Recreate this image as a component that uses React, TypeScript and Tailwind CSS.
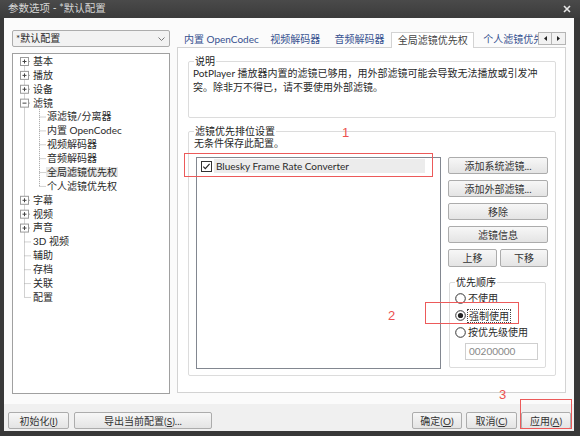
import type { ReactNode } from "react";

function Btn({ children, className = "" }: { children: ReactNode; className?: string }) {
  return (
    <div
      className={
        "flex items-center justify-center rounded-[2px] border border-[#acacac] bg-gradient-to-b from-[#f7f7f7] to-[#e4e4e4] text-[#333] leading-none " +
        className
      }
    >
      {children}
    </div>
  );
}

function Key({ k }: { k: string }) {
  return (
    <>
      (<span className="underline underline-offset-[1px]">{k}</span>)
    </>
  );
}

function GroupBox({ title, className = "", children }: { title: string; className?: string; children: ReactNode }) {
  return (
    <div className={"relative rounded-[2px] border border-[#dcdcdc] " + className}>
      <span className="absolute -top-[7px] left-[5px] bg-white px-[1px] leading-[12px] text-[#222]">{title}</span>
      {children}
    </div>
  );
}

function Radio({ checked = false }: { checked?: boolean }) {
  return (
    <svg width="11" height="11" viewBox="0 0 11 11" className="shrink-0">
      <circle cx="5.5" cy="5.5" r="4.8" fill="#fff" stroke="#333" strokeWidth="1" />
      {checked && <circle cx="5.5" cy="5.5" r="2.6" fill="#222" />}
    </svg>
  );
}

type Node = { label: string; level: 0 | 1; box?: "+" | "-"; selected?: boolean };

const tree: Node[] = [
  { label: "基本", level: 0, box: "+" },
  { label: "播放", level: 0, box: "+" },
  { label: "设备", level: 0, box: "+" },
  { label: "滤镜", level: 0, box: "-" },
  { label: "源滤镜/分离器", level: 1 },
  { label: "内置 OpenCodec", level: 1 },
  { label: "视频解码器", level: 1 },
  { label: "音频解码器", level: 1 },
  { label: "全局滤镜优先权", level: 1, selected: true },
  { label: "个人滤镜优先权", level: 1 },
  { label: "字幕", level: 0, box: "+" },
  { label: "视频", level: 0, box: "+" },
  { label: "声音", level: 0, box: "+" },
  { label: "3D 视频", level: 0 },
  { label: "辅助", level: 0 },
  { label: "存档", level: 0 },
  { label: "关联", level: 0 },
  { label: "配置", level: 0 },
];

const ROW = 13.88;

function TreeLines() {
  const cy = (i: number) => 7.5 + i * ROW;
  return (
    <svg width="60" height="260" className="pointer-events-none absolute left-0 top-0">
      <g stroke="#a3a3a3" strokeWidth="1" strokeDasharray="1 1" fill="none">
        <line x1="11.5" y1={cy(0)} x2="11.5" y2={cy(17)} />
        <line x1="26.5" y1={cy(3) + 4} x2="26.5" y2={cy(9)} />
        {tree.map((n, i) =>
          n.level === 0 ? (
            <line key={i} x1={n.box ? 16 : 11.5} y1={cy(i)} x2="18" y2={cy(i)} />
          ) : (
            <line key={i} x1="26.5" y1={cy(i)} x2="33" y2={cy(i)} />
          )
        )}
      </g>
      {tree.map((n, i) =>
        n.box ? (
          <g key={"b" + i}>
            <rect x="7.5" y={cy(i) - 4} width="8" height="8" fill="#fff" stroke="#9a9a9a" />
            <line x1="9.5" y1={cy(i)} x2="13.5" y2={cy(i)} stroke="#444" />
            {n.box === "+" && <line x1="11.5" y1={cy(i) - 2} x2="11.5" y2={cy(i) + 2} stroke="#444" />}
          </g>
        ) : null
      )}
    </svg>
  );
}

export default function App() {
  return (
    <div className="relative flex h-[436px] w-[580px] flex-col bg-[#383838] font-['Lato','Noto_Sans_CJK_SC',sans-serif] text-[10px] text-[#2a2a2a]">
      {/* title bar */}
      <div className="flex h-[18px] items-center justify-between bg-gradient-to-b from-[#4a4a4a] to-[#3b3b3b] pl-[8px] pr-[9px]">
        <span className="text-[10.5px] text-[#d6d6d6]">参数选项 - *默认配置</span>
        <svg width="8" height="8" viewBox="0 0 8 8">
          <path d="M1 1l6 6M7 1 1 7" stroke="#e6e6e6" strokeWidth="1.6" />
        </svg>
      </div>

      {/* body */}
      <div className="mb-[5px] ml-[4px] mr-[6px] flex flex-1 flex-col bg-[#fbfbfb]">
        <div className="flex h-[386px] pl-[8px] pt-[12px]">
          {/* left column */}
          <div className="flex w-[158px] flex-col">
            <div className="flex h-[17px] items-center justify-between rounded-[2px] border border-[#acacac] bg-[#f2f2f2] pl-[3px] pr-[4px]">
              <span>*默认配置</span>
              <svg width="7" height="4" viewBox="0 0 7 4">
                <path d="M0.5 0.5 3.5 3.5 6.5 0.5" stroke="#777" fill="none" />
              </svg>
            </div>
            <div className="relative mt-[6px] h-[341px] border border-[#a0a0a0] bg-white">
              <TreeLines />
              {tree.map((n, i) => (
                <div
                  key={i}
                  className={
                    "flex h-[13.88px] items-center whitespace-nowrap leading-none " +
                    (n.level === 0 ? "pl-[19px]" : "pl-[33px]")
                  }
                >
                  <span className={n.selected ? "bg-[#e6e6e6] px-[1px]" : "px-[1px]"}>{n.label}</span>
                </div>
              ))}
            </div>
          </div>

          {/* right column */}
          <div className="ml-[7px] flex w-[389px] flex-col">
            <div className="flex h-[17px] items-end pl-[3px]">
              <div className="flex h-[15px] w-[83px] items-center justify-center text-[#35508f]">内置 OpenCodec</div>
              <div className="flex h-[15px] w-[65px] items-center justify-center text-[#35508f]">视频解码器</div>
              <div className="flex h-[15px] w-[64px] items-center justify-center text-[#35508f]">音频解码器</div>
              <div className="z-10 -mb-[1px] flex h-[16px] w-[83px] items-center justify-center border border-b-0 border-[#d3d3d3] bg-white text-[#444]">
                全局滤镜优先权
              </div>
              <div className="flex h-[15px] w-[64px] items-center overflow-hidden whitespace-nowrap pl-[9px] text-[#35508f]">
                个人滤镜优先权
              </div>
              <div className="mb-[2px] flex">
                <div className="flex h-[13px] w-[14px] items-center justify-center border border-[#b5b5b5] bg-[#f2f2f2]">
                  <svg width="3" height="5" viewBox="0 0 3 5"><path d="M3 0v5L0 2.5z" fill="#222" /></svg>
                </div>
                <div className="flex h-[13px] w-[14px] items-center justify-center border border-l-0 border-[#b5b5b5] bg-[#f2f2f2]">
                  <svg width="3" height="5" viewBox="0 0 3 5"><path d="M0 0v5L3 2.5z" fill="#222" /></svg>
                </div>
              </div>
            </div>

            <div className="h-[346px] border border-[#d3d3d3] bg-white pl-[10px] pr-[9px] pt-[13px]">
              <GroupBox title="说明" className="h-[57px]">
                <p className="pl-[4px] pt-[4px] leading-[14px]">
                  PotPlayer 播放器内置的滤镜已够用，用外部滤镜可能会导致无法播放或引发冲
                  <br />
                  突。除非万不得已，请不要使用外部滤镜。
                </p>
              </GroupBox>

              <GroupBox title="滤镜优先排位设置" className="mt-[13px] h-[245px]">
                <p className="pl-[5px] pt-[5px] leading-[13px]">无条件保存此配置。</p>
                <div className="mt-[7px] flex pl-[7px]">
                  <div className="h-[212px] w-[245px] border border-[#828790] bg-white pl-[4px] pt-[1px]">
                    <div className="flex h-[14px] items-center">
                      <svg width="11" height="11" viewBox="0 0 11 11" className="shrink-0">
                        <rect x="0.5" y="0.5" width="10" height="10" fill="#fff" stroke="#333" />
                        <path d="M2.3 5.6 4.3 7.7 8.6 2.8" stroke="#222" strokeWidth="1.1" fill="none" />
                      </svg>
                      <span className="ml-[2px] flex h-[14px] w-[211px] items-center bg-[#ececec] pl-[2px]">
                        Bluesky Frame Rate Converter
                      </span>
                    </div>
                  </div>

                  <div className="ml-[7px] flex w-[100px] flex-col">
                    <Btn className="h-[17px]">添加系统滤镜...</Btn>
                    <Btn className="mt-[6px] h-[17px]">添加外部滤镜...</Btn>
                    <Btn className="mt-[6px] h-[17px]">移除</Btn>
                    <Btn className="mt-[6px] h-[17px]">滤镜信息</Btn>
                    <div className="mt-[6px] flex justify-between">
                      <Btn className="h-[18px] w-[49px]">上移</Btn>
                      <Btn className="h-[18px] w-[48px]">下移</Btn>
                    </div>
                    <GroupBox title="优先顺序" className="ml-[1px] mt-[15px] h-[86px] w-[97px]">
                      <div className="pl-[5px] pt-[7px]">
                        <div className="flex h-[17px] items-center">
                          <Radio />
                          <span className="ml-[2px]">不使用</span>
                        </div>
                        <div className="flex h-[17px] items-center">
                          <Radio checked />
                          <span className="ml-[1px] border border-dotted border-[#444] px-[1px] leading-[12px]">强制使用</span>
                        </div>
                        <div className="flex h-[17px] items-center">
                          <Radio />
                          <span className="ml-[2px]">按优先级使用</span>
                        </div>
                        <div className="ml-[10px] mt-[2px] flex h-[17px] w-[73px] items-center border border-[#cfcfcf] bg-white pl-[3px] text-[#888]">
                          00200000
                        </div>
                      </div>
                    </GroupBox>
                  </div>
                </div>
              </GroupBox>
            </div>
          </div>
        </div>

        {/* bottom strip */}
        <div className="flex flex-1 items-start bg-[#f0f0f0] pl-[4px] pr-[3px] pt-[8px]">
          <Btn className="h-[17px] w-[61px]">
            初始化<Key k="I" />
          </Btn>
          <Btn className="ml-[5px] h-[17px] w-[138px]">
            导出当前配置<Key k="S" />...
          </Btn>
          <div className="flex-1" />
          <Btn className="h-[17px] w-[50px]">
            确定<Key k="O" />
          </Btn>
          <Btn className="ml-[4px] h-[17px] w-[51px]">
            取消<Key k="C" />
          </Btn>
          <Btn className="ml-[4px] h-[17px] w-[50px]">
            应用<Key k="A" />
          </Btn>
        </div>
      </div>

      {/* red annotations */}
      <div className="pointer-events-none absolute left-[184px] top-[153px] h-[24px] w-[249px] border border-[#ec5a5a]" />
      <span className="absolute left-[342px] top-[123px] font-['Liberation_Sans',sans-serif] text-[13px] text-[#ec5050]">1</span>
      <div className="pointer-events-none absolute left-[425px] top-[302px] h-[22px] w-[94px] border border-[#ec5a5a]" />
      <span className="absolute left-[388px] top-[306px] font-['Liberation_Sans',sans-serif] text-[13px] text-[#ec5050]">2</span>
      <div className="pointer-events-none absolute left-[520px] top-[399px] h-[30px] w-[52px] border border-[#ec5a5a]" />
      <span className="absolute left-[499px] top-[385px] font-['Liberation_Sans',sans-serif] text-[13px] text-[#ec5050]">3</span>
    </div>
  );
}
